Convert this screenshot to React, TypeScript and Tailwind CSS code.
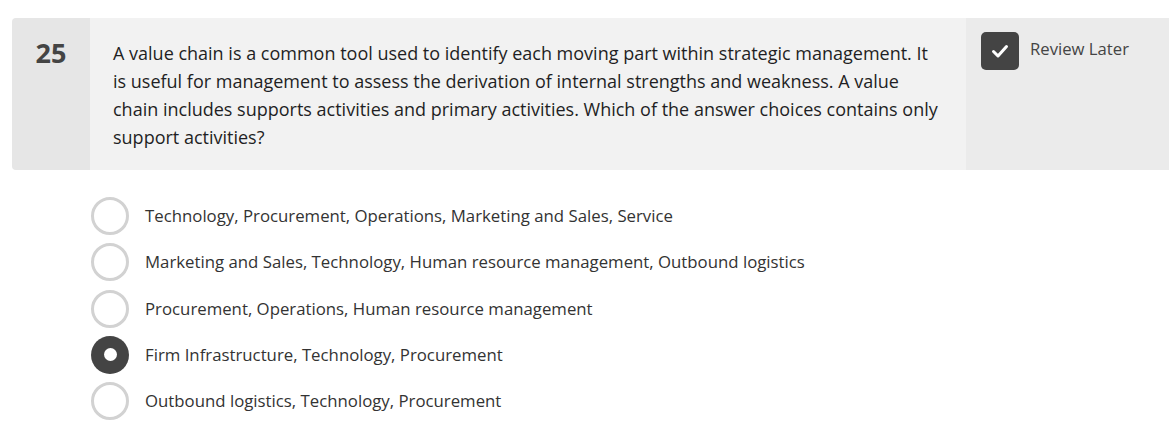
import { useState } from 'react';

const OPTIONS = [
  'Technology, Procurement, Operations, Marketing and Sales, Service',
  'Marketing and Sales, Technology, Human resource management, Outbound logistics',
  'Procurement, Operations, Human resource management',
  'Firm Infrastructure, Technology, Procurement',
  'Outbound logistics, Technology, Procurement',
];

export default function App() {
  const [selected, setSelected] = useState(3);
  const [review, setReview] = useState(true);

  return (
    <div className="w-[1169px] h-[447px] bg-white pt-[18px] pl-[12px] font-['Open_Sans',sans-serif]">
      {/* Question card */}
      <div className="flex rounded-l-[4px] overflow-hidden h-[152px]">
        <div className="w-[78px] shrink-0 bg-[#e6e6e6] pt-[17px] text-center text-[27px] font-bold leading-[36px] text-[#444]">
          25
        </div>
        <div className="w-[876px] shrink-0 bg-[#f2f2f2] pl-[23px] pr-[22px] pt-[21px] text-[18px] leading-[28px] text-[#1f1f24]">
          A value chain is a common tool used to identify each moving part within strategic management. It
          is useful for management to assess the derivation of internal strengths and weakness. A value
          chain includes supports activities and primary activities. Which of the answer choices contains only
          support activities?
        </div>
        <div className="flex-1 bg-[#ebebeb] pl-[15px] pt-[14px]">
          <button
            type="button"
            onClick={() => setReview(!review)}
            className="flex items-start gap-[11px]"
          >
            <span
              className={`w-[38px] h-[38px] rounded-[5px] flex items-center justify-center ${
                review ? 'bg-[#444]' : 'bg-white border-2 border-[#ccc]'
              }`}
            >
              {review && (
                <svg width="20" height="20" viewBox="0 0 20 20" fill="none">
                  <path d="M3.5 10.5 L8 15 L16.5 5.5" stroke="white" strokeWidth="3" strokeLinecap="round" strokeLinejoin="round" />
                </svg>
              )}
            </span>
            <span className="text-[16.7px] leading-[22px] pt-[6px] text-[#444]">Review Later</span>
          </button>
        </div>
      </div>

      {/* Options */}
      <div className="pl-[79px] pt-[27px] flex flex-col gap-[8.3px]">
        {OPTIONS.map((opt, i) => (
          <label key={opt} className="flex items-center gap-[16px] cursor-pointer" onClick={() => setSelected(i)}>
            <span
              className={`w-[38px] h-[38px] rounded-full flex items-center justify-center ${
                selected === i ? 'bg-[#444]' : 'border-[3px] border-[#d2d2d2] bg-white'
              }`}
            >
              {selected === i && <span className="w-[13px] h-[13px] rounded-full bg-white" />}
            </span>
            <span className="text-[16.8px] leading-[22px] text-[#333]">{opt}</span>
          </label>
        ))}
      </div>
    </div>
  );
}
